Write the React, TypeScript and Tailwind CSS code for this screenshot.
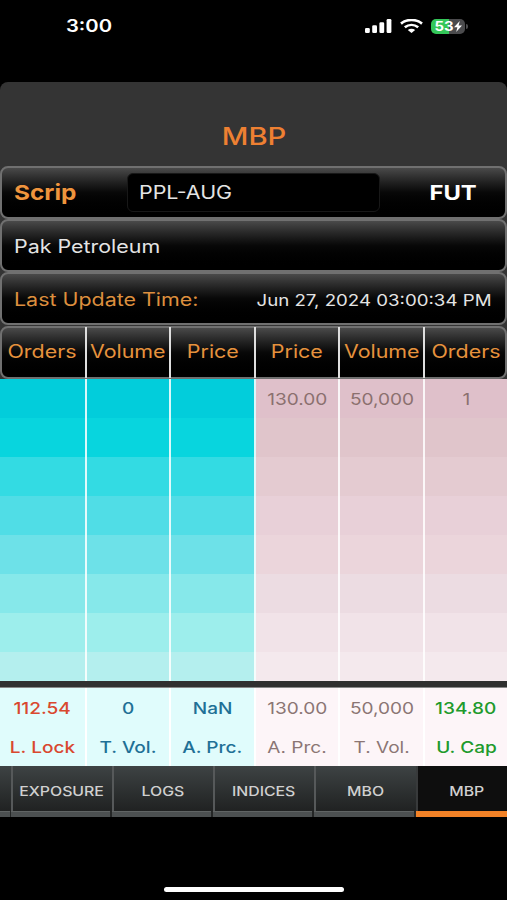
import React from 'react';
import clsx from 'clsx';

type TextProps = {
  children: React.ReactNode;
  className?: string;
};

const columns = ['Orders', 'Volume', 'Price', 'Price', 'Volume', 'Orders'];

const bidRows = [
  'bg-[#02cddb]',
  'bg-[#08d5de]',
  'bg-[#33dbe3]',
  'bg-[#50dde6]',
  'bg-[#6de1e8]',
  'bg-[#86e8ea]',
  'bg-[#9deeec]',
  'bg-[#b4efee]',
];

const askRows = [
  'bg-[#dfc0ca]',
  'bg-[#e0c5cb]',
  'bg-[#e4cbd1]',
  'bg-[#e8d0d8]',
  'bg-[#ebd5db]',
  'bg-[#ecdce2]',
  'bg-[#f1e3e8]',
  'bg-[#f4e9ed]',
];

const askValues = ['130.00', '50,000', '1'];

const totals = [
  { value: '112.54', label: 'L. Lock', color: 'text-[#d9482f] font-medium' },
  { value: '0', label: 'T. Vol.', color: 'text-[#1f7096] font-medium' },
  { value: 'NaN', label: 'A. Prc.', color: 'text-[#1f7096] font-medium' },
  { value: '130.00', label: 'A. Prc.', color: 'text-[#8b7574]' },
  { value: '50,000', label: 'T. Vol.', color: 'text-[#8b7574]' },
  { value: '134.80', label: 'U. Cap', color: 'text-[#219a2c] font-medium' },
];

const tabs = ['EXPOSURE', 'LOGS', 'INDICES', 'MBO', 'MBP'];

const grid = 'grid grid-cols-[87px_84px_85px_84px_85px_82px]';

const Text = ({ children, className }: TextProps) => (
  <span className={clsx('inline-block whitespace-nowrap scale-x-[1.19]', className)}>{children}</span>
);

const Bar = ({ children, className }: TextProps) => (
  <div
    className={clsx(
      'h-[53px] rounded-lg border-2 border-[#707070] bg-linear-to-b from-[#4a4a4a] via-[#080808] via-50% to-black',
      className
    )}
  >
    {children}
  </div>
);

const StatusBar = () => (
  <div className="flex h-[82px] items-start pt-[18px] pl-[66px] pr-[39px]">
    <Text className="origin-left text-[17px] leading-4 font-semibold text-white">3:00</Text>
    <div className="ml-auto flex h-4 items-center">
      <svg width="27" height="14" viewBox="0 0 27 14" fill="#fff">
        <rect x="0" y="9" width="4.8" height="5" rx="1.3" />
        <rect x="7.2" y="6.3" width="4.8" height="7.7" rx="1.3" />
        <rect x="14.4" y="3.3" width="4.8" height="10.7" rx="1.3" />
        <rect x="21.6" y="0" width="4.8" height="14" rx="1.3" />
      </svg>
      <svg className="ml-2" width="23" height="14" viewBox="0 0 23 14" fill="none" stroke="#fff" strokeWidth="2.7">
        <path d="M1 4.6C7 -.2 16 -.2 22 4.6" />
        <path d="M4.8 8.3C8.8 5.2 14.2 5.2 18.2 8.3" />
        <path d="M7.8 10.9C10 9.2 13 9.2 15.2 10.9L11.5 14Z" fill="#fff" stroke="none" />
      </svg>
      <div className="ml-2 flex h-[15px] w-[34px] items-center justify-center rounded-[5px] bg-linear-to-r from-[#34c759] from-53% to-[#4b4b4d] to-53%">
        <Text className="ml-0.5 pt-px text-[12.5px] leading-[14px] font-bold text-white">53</Text>
        <svg className="ml-0.5" width="8" height="11" viewBox="0 0 8 11" fill="#fff">
          <path d="M5.8 0L0 6.2H3.4L2.2 11L8 4.6H4.6Z" />
        </svg>
      </div>
      <div className="ml-px h-[5px] w-[2px] rounded-r-full bg-[#4b4b4d]" />
    </div>
  </div>
);

const App = () => {
  return (
    <div className="h-[900px] w-[507px] overflow-hidden bg-black font-[Inter,sans-serif]">
      <StatusBar />

      <main className="rounded-t-lg bg-[#343434]">
        <h1 className="flex h-[84px] items-end justify-center pb-[15px] pl-px text-[24.5px] leading-[30px] font-medium text-[#ee8032]">
          <Text>MBP</Text>
        </h1>

        <Bar className="flex items-center">
          <Text className="mt-px ml-3 w-[97px] origin-left text-[20.5px] font-bold text-[#ef943d]">Scrip</Text>
          <div className="ml-4 flex h-[39px] w-[253px] items-center rounded-md border border-[#181818] bg-black pl-[11px]">
            <Text className="origin-left text-[18px] text-[#e4e4e4]">PPL-AUG</Text>
          </div>
          <Text className="mr-7 ml-auto origin-right text-[20px] font-bold text-white">FUT</Text>
        </Bar>
        <Bar className="flex items-center pl-3">
          <Text className="mt-px origin-left text-[18px] text-[#e4e4e4]">Pak Petroleum</Text>
        </Bar>
        <Bar className="flex items-center justify-between pt-0.5 pr-[13px] pl-3">
          <Text className="origin-left text-[18px] text-[#dd8f3e]">Last Update Time:</Text>
          <Text className="mt-0.5 origin-right text-[15.7px] text-[#e4e4e4]">Jun 27, 2024 03:00:34 PM</Text>
        </Bar>

        <Bar className="mt-px">
          <div className={clsx(grid, '-mx-0.5 -mt-px h-[51px]')}>
            {columns.map((name, i) => (
              <div
                key={i}
                className={clsx('flex items-center justify-center pb-0.5 text-[18px] text-[#e6923d]', i < 5 && 'border-r-2 border-[#dedede]')}
              >
                <Text>{name}</Text>
              </div>
            ))}
          </div>
        </Bar>

        <div className="h-[302px] overflow-hidden">
          {bidRows.map((bid, row) => (
            <div key={row} className={clsx(grid, 'h-[39px]')}>
              {columns.map((_, i) => (
                <div
                  key={i}
                  className={clsx(
                    'flex items-center justify-center text-[16px] text-[#8b706f]',
                    i < 3 ? bid : askRows[row],
                    i < 5 && 'border-r-2 border-white/85'
                  )}
                >
                  {row === 0 && i > 2 && <Text>{askValues[i - 3]}</Text>}
                </div>
              ))}
            </div>
          ))}
        </div>

        <div className="h-[7px] border-b border-[#888] bg-[#303030]" />

        <div className={clsx(grid, 'h-[78px]')}>
          {totals.map((total, i) => (
            <div
              key={i}
              className={clsx(
                'flex flex-col items-center pt-px text-[16px] leading-[39px]',
                total.color,
                i < 3 ? 'bg-[#e0fcfc]' : 'bg-[#fdf5f8]',
                i < 5 && 'border-r-2 border-white'
              )}
            >
              <Text>{total.value}</Text>
              <Text>{total.label}</Text>
            </div>
          ))}
        </div>
      </main>

      <nav className="grid h-[51px] grid-cols-[10.6px_repeat(5,101.3px)] bg-[#242626]">
        <div className="flex flex-col">
          <div className="flex-1 bg-linear-to-b from-[#3e4344] to-[#202222]" />
          <div className="mr-px h-[6px] border-t border-[#606464] bg-[#4c5051]" />
        </div>
        {tabs.map((tab) => {
          const active = tab === 'MBP';
          return (
            <div key={tab} className="flex flex-col">
              <div
                className={clsx(
                  'flex flex-1 items-center justify-center border-l-2 pt-1.5 pr-0.5 text-[13.3px] font-medium text-[#d0d0d0]',
                  active ? 'border-[#383a3b] bg-[#0e0e0e]' : 'border-[#56595a] bg-linear-to-b from-[#3e4344] to-[#202222]'
                )}
              >
                <Text>{tab}</Text>
              </div>
              <div className={clsx('h-[6px]', active ? 'bg-[#f28227]' : 'mr-0.5 border-t border-[#606464] bg-[#4c5051]')} />
            </div>
          );
        })}
      </nav>

      <div className="mt-[70px] ml-[164px] h-[5px] w-[180px] rounded-full bg-white" />
    </div>
  );
};

export default App;
